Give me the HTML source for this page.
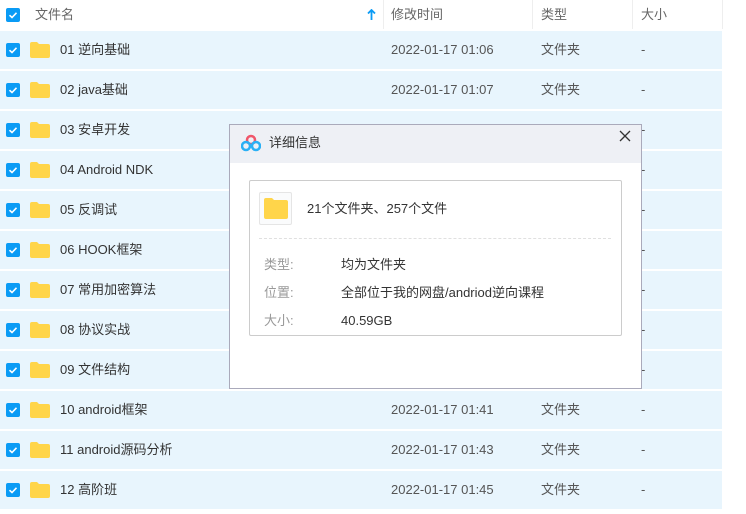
<!DOCTYPE html>
<html><head><meta charset="utf-8"><style>
*{margin:0;padding:0;box-sizing:border-box}
body{width:746px;height:514px;background:#fff;font-family:"Liberation Sans","Noto Sans CJK SC",sans-serif;font-size:13px;color:#333;position:relative;overflow:hidden}
.hdr{position:absolute;left:0;top:0;width:746px;height:30px;color:#666}
.hdr span{position:absolute;top:0;line-height:29px}
.vl{position:absolute;top:0;width:1px;height:29px;background:#eee}
.row{position:absolute;left:0;width:722px;height:38px;background:#e8f5fd}
.cb{position:absolute;left:6px;top:12px;width:14px;height:14px;background:#0a9bf5;border-radius:2px}
.fd{position:absolute;left:30px;top:11px;width:20px;height:16px}
.row span{position:absolute;top:0;line-height:38px}
.a{left:60px;color:#333}.b{left:391px;color:#555}.c{left:541px;color:#555}.d{left:641px;color:#555}
.dlg{position:absolute;left:229px;top:124px;width:413px;height:265px;border:1px solid #aab;background:#fff}
.dh{height:38px;background:#eef0f5;position:relative}
.in span{position:absolute;line-height:16px}
</style></head><body>
<div class="hdr">
<div class="cb" style="top:8px"><svg width="14" height="14"><path d="M3.5 7.2 6 9.5 10.5 4.8" stroke="#fff" stroke-width="1.6" fill="none"/></svg></div>
<span style="left:35px">文件名</span>
<svg style="position:absolute;left:367px;top:9px" width="9" height="11"><path d="M4.5 1V11M1 4.5 4.5 1 8 4.5" stroke="#0a9bf5" stroke-width="1.8" fill="none"/></svg>
<div class="vl" style="left:383px"></div>
<span style="left:391px">修改时间</span>
<div class="vl" style="left:532px"></div>
<span style="left:541px">类型</span>
<div class="vl" style="left:632px"></div>
<span style="left:641px">大小</span>
<div class="vl" style="left:722px"></div>
</div>

<div class="row" style="top:31px"><div class="cb"><svg width="14" height="14"><path d="M3.5 7.2 6 9.5 10.5 4.8" stroke="#fff" stroke-width="1.6" fill="none"/></svg></div><svg class="fd" viewBox="0 0 20 16"><path d="M0 2Q0 0 2 0H7L9 2H18Q20 2 20 4V14Q20 16 18 16H2Q0 16 0 14Z" fill="#ffd54a"/></svg><span class="a">01 逆向基础</span><span class="b">2022-01-17 01:06</span><span class="c">文件夹</span><span class="d">-</span></div>
<div class="row" style="top:71px"><div class="cb"><svg width="14" height="14"><path d="M3.5 7.2 6 9.5 10.5 4.8" stroke="#fff" stroke-width="1.6" fill="none"/></svg></div><svg class="fd" viewBox="0 0 20 16"><path d="M0 2Q0 0 2 0H7L9 2H18Q20 2 20 4V14Q20 16 18 16H2Q0 16 0 14Z" fill="#ffd54a"/></svg><span class="a">02 java基础</span><span class="b">2022-01-17 01:07</span><span class="c">文件夹</span><span class="d">-</span></div>
<div class="row" style="top:111px"><div class="cb"><svg width="14" height="14"><path d="M3.5 7.2 6 9.5 10.5 4.8" stroke="#fff" stroke-width="1.6" fill="none"/></svg></div><svg class="fd" viewBox="0 0 20 16"><path d="M0 2Q0 0 2 0H7L9 2H18Q20 2 20 4V14Q20 16 18 16H2Q0 16 0 14Z" fill="#ffd54a"/></svg><span class="a">03 安卓开发</span><span class="d">-</span></div>
<div class="row" style="top:151px"><div class="cb"><svg width="14" height="14"><path d="M3.5 7.2 6 9.5 10.5 4.8" stroke="#fff" stroke-width="1.6" fill="none"/></svg></div><svg class="fd" viewBox="0 0 20 16"><path d="M0 2Q0 0 2 0H7L9 2H18Q20 2 20 4V14Q20 16 18 16H2Q0 16 0 14Z" fill="#ffd54a"/></svg><span class="a">04 Android NDK</span><span class="d">-</span></div>
<div class="row" style="top:191px"><div class="cb"><svg width="14" height="14"><path d="M3.5 7.2 6 9.5 10.5 4.8" stroke="#fff" stroke-width="1.6" fill="none"/></svg></div><svg class="fd" viewBox="0 0 20 16"><path d="M0 2Q0 0 2 0H7L9 2H18Q20 2 20 4V14Q20 16 18 16H2Q0 16 0 14Z" fill="#ffd54a"/></svg><span class="a">05 反调试</span><span class="d">-</span></div>
<div class="row" style="top:231px"><div class="cb"><svg width="14" height="14"><path d="M3.5 7.2 6 9.5 10.5 4.8" stroke="#fff" stroke-width="1.6" fill="none"/></svg></div><svg class="fd" viewBox="0 0 20 16"><path d="M0 2Q0 0 2 0H7L9 2H18Q20 2 20 4V14Q20 16 18 16H2Q0 16 0 14Z" fill="#ffd54a"/></svg><span class="a">06 HOOK框架</span><span class="d">-</span></div>
<div class="row" style="top:271px"><div class="cb"><svg width="14" height="14"><path d="M3.5 7.2 6 9.5 10.5 4.8" stroke="#fff" stroke-width="1.6" fill="none"/></svg></div><svg class="fd" viewBox="0 0 20 16"><path d="M0 2Q0 0 2 0H7L9 2H18Q20 2 20 4V14Q20 16 18 16H2Q0 16 0 14Z" fill="#ffd54a"/></svg><span class="a">07 常用加密算法</span><span class="d">-</span></div>
<div class="row" style="top:311px"><div class="cb"><svg width="14" height="14"><path d="M3.5 7.2 6 9.5 10.5 4.8" stroke="#fff" stroke-width="1.6" fill="none"/></svg></div><svg class="fd" viewBox="0 0 20 16"><path d="M0 2Q0 0 2 0H7L9 2H18Q20 2 20 4V14Q20 16 18 16H2Q0 16 0 14Z" fill="#ffd54a"/></svg><span class="a">08 协议实战</span><span class="d">-</span></div>
<div class="row" style="top:351px"><div class="cb"><svg width="14" height="14"><path d="M3.5 7.2 6 9.5 10.5 4.8" stroke="#fff" stroke-width="1.6" fill="none"/></svg></div><svg class="fd" viewBox="0 0 20 16"><path d="M0 2Q0 0 2 0H7L9 2H18Q20 2 20 4V14Q20 16 18 16H2Q0 16 0 14Z" fill="#ffd54a"/></svg><span class="a">09 文件结构</span><span class="d">-</span></div>
<div class="row" style="top:391px"><div class="cb"><svg width="14" height="14"><path d="M3.5 7.2 6 9.5 10.5 4.8" stroke="#fff" stroke-width="1.6" fill="none"/></svg></div><svg class="fd" viewBox="0 0 20 16"><path d="M0 2Q0 0 2 0H7L9 2H18Q20 2 20 4V14Q20 16 18 16H2Q0 16 0 14Z" fill="#ffd54a"/></svg><span class="a">10 android框架</span><span class="b">2022-01-17 01:41</span><span class="c">文件夹</span><span class="d">-</span></div>
<div class="row" style="top:431px"><div class="cb"><svg width="14" height="14"><path d="M3.5 7.2 6 9.5 10.5 4.8" stroke="#fff" stroke-width="1.6" fill="none"/></svg></div><svg class="fd" viewBox="0 0 20 16"><path d="M0 2Q0 0 2 0H7L9 2H18Q20 2 20 4V14Q20 16 18 16H2Q0 16 0 14Z" fill="#ffd54a"/></svg><span class="a">11 android源码分析</span><span class="b">2022-01-17 01:43</span><span class="c">文件夹</span><span class="d">-</span></div>
<div class="row" style="top:471px"><div class="cb"><svg width="14" height="14"><path d="M3.5 7.2 6 9.5 10.5 4.8" stroke="#fff" stroke-width="1.6" fill="none"/></svg></div><svg class="fd" viewBox="0 0 20 16"><path d="M0 2Q0 0 2 0H7L9 2H18Q20 2 20 4V14Q20 16 18 16H2Q0 16 0 14Z" fill="#ffd54a"/></svg><span class="a">12 高阶班</span><span class="b">2022-01-17 01:45</span><span class="c">文件夹</span><span class="d">-</span></div>

<div class="dlg">
<div class="dh">
<svg style="position:absolute;left:11px;top:9px" width="20" height="18" viewBox="0 0 20 18"><circle cx="10" cy="6" r="4" fill="none" stroke="#f0566a" stroke-width="2.5"/><circle cx="5" cy="12" r="4" fill="none" stroke="#2ab0f5" stroke-width="2.5"/><circle cx="15" cy="12" r="4" fill="none" stroke="#2ab0f5" stroke-width="2.5"/></svg>
<span style="position:absolute;left:39px;top:0;line-height:36px;font-size:13px">详细信息</span>
<svg style="position:absolute;left:389px;top:5px" width="12" height="12"><path d="M1 1 11 11M11 1 1 11" stroke="#333" stroke-width="1.3"/></svg>
</div>
<div class="in" style="position:absolute;left:19px;top:55px;width:373px;height:156px;border:1px solid #ccc;border-radius:2px">
<div style="position:absolute;left:9px;top:11px;width:33px;height:33px;border:1px solid #e5e5e5;border-radius:2px;background:#fafbfc">
<svg style="position:absolute;left:4px;top:5px" width="24" height="21" viewBox="0 0 24 21"><path d="M0 2Q0 0 2 0H8L10 2H22Q24 2 24 4V19Q24 21 22 21H2Q0 21 0 19Z" fill="#ffd54a"/></svg></div>
<span style="left:57px;top:20px">21个文件夹、257个文件</span>
<div style="position:absolute;left:9px;top:57px;width:352px;border-top:1px dashed #e0e0e0"></div>
<span style="left:14px;top:76px;color:#999">类型:</span><span style="left:91px;top:76px">均为文件夹</span>
<span style="left:14px;top:104px;color:#999">位置:</span><span style="left:91px;top:104px">全部位于我的网盘/andriod逆向课程</span>
<span style="left:14px;top:132px;color:#999">大小:</span><span style="left:91px;top:132px">40.59GB</span>
</div>
</div>
</body></html>
